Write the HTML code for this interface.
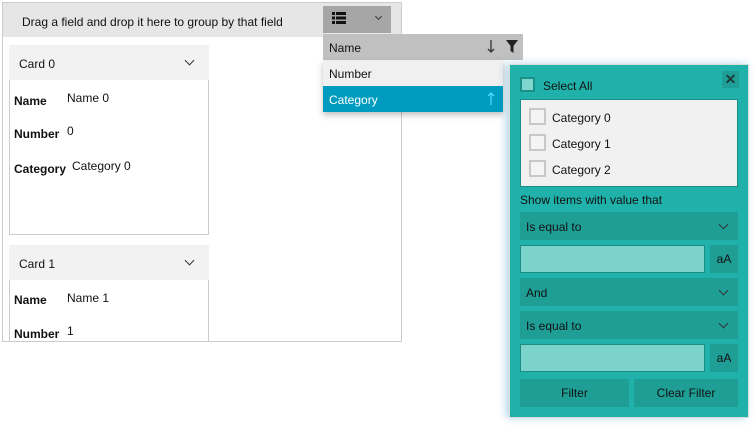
<!DOCTYPE html>
<html><head><meta charset="utf-8"><style>
*{margin:0;padding:0;box-sizing:border-box}
body{width:755px;height:430px;background:#fff;font-family:"Liberation Sans",sans-serif;font-size:12px;color:#111;position:relative;overflow:hidden}
.a{position:absolute}
.t{position:absolute;white-space:nowrap;line-height:14px}
.b{font-weight:bold}
.chev{position:absolute;width:7px;height:7px;border-right:1.3px solid #333;border-bottom:1.3px solid #333;transform:rotate(45deg)}
.cb{position:absolute;width:17px;height:17px;background:#f4f4f4;border:2px solid #c8c8c8}
.combo{position:absolute;left:520px;width:218px;height:28px;background:#1f9e96}
.inp{position:absolute;left:520px;width:185px;height:28px;background:#7bd3cb;border:1px solid #1a8d86}
.aa{position:absolute;left:710px;width:28px;height:28px;background:#1f9e96;text-align:center;line-height:28px}
</style></head><body>
<div class="a" style="left:2px;top:2px;width:400px;height:340px;border:1px solid #ccc"></div>
<div class="a" style="left:3px;top:3px;width:398px;height:34px;background:#e6e6e6"></div>
<div class="t" style="left:22px;top:15px">Drag a field and drop it here to group by that field</div>
<div class="a" style="left:323px;top:6px;width:68px;height:27px;background:#a6a6a6"></div>
<svg class="a" style="left:332px;top:12px" width="14" height="12"><rect x="0" y="0" width="3" height="3" fill="#111"/><rect x="4" y="0" width="10" height="3" fill="#111"/><rect x="0" y="4.5" width="3" height="3" fill="#111"/><rect x="4" y="4.5" width="10" height="3" fill="#111"/><rect x="0" y="9" width="3" height="3" fill="#111"/><rect x="4" y="9" width="10" height="3" fill="#111"/></svg>
<div class="chev" style="left:376px;top:14px;width:5px;height:5px"></div>

<div class="a" style="left:9px;top:45px;width:200px;height:190px;border:1px solid #ccc;border-top:none"></div>
<div class="a" style="left:9px;top:45px;width:200px;height:35px;background:#f2f2f2"></div>
<div class="t" style="left:19px;top:57px">Card 0</div>
<div class="chev" style="left:186px;top:57px"></div>
<div class="t b" style="left:14px;top:94px">Name</div><div class="t" style="left:67px;top:91px">Name 0</div>
<div class="t b" style="left:14px;top:127px">Number</div><div class="t" style="left:67px;top:124px">0</div>
<div class="t b" style="left:14px;top:162px">Category</div><div class="t" style="left:72px;top:159px">Category 0</div>

<div class="a" style="left:9px;top:245px;width:200px;height:96px;border:1px solid #ccc;border-top:none;border-bottom:none"></div>
<div class="a" style="left:9px;top:245px;width:200px;height:35px;background:#f2f2f2"></div>
<div class="t" style="left:19px;top:257px">Card 1</div>
<div class="chev" style="left:186px;top:257px"></div>
<div class="t b" style="left:14px;top:293px">Name</div><div class="t" style="left:67px;top:291px">Name 1</div>
<div class="t b" style="left:14px;top:327px">Number</div><div class="t" style="left:67px;top:324px">1</div>

<div class="a" style="left:323px;top:34px;width:200px;height:26px;background:#c0c0c0"></div>
<div class="t" style="left:329px;top:41px">Name</div>
<svg class="a" style="left:487px;top:40px" width="8" height="13"><path d="M4 0V12M1 9L4 12L7 9" stroke="#333" stroke-width="1.3" fill="none"/></svg>
<svg class="a" style="left:506px;top:40px" width="12" height="13"><path d="M0 0H12L7.5 6V13L4.5 11V6Z" fill="#222"/></svg>
<div class="a" style="left:323px;top:60px;width:180px;height:52px;box-shadow:0 3px 6px rgba(0,0,0,.25)"></div>
<div class="a" style="left:323px;top:60px;width:180px;height:26px;background:#f0f0f0"></div>
<div class="t" style="left:329px;top:67px">Number</div>
<div class="a" style="left:323px;top:86px;width:180px;height:26px;background:#009cbf"></div>
<div class="t" style="left:329px;top:93px;color:#fff">Category</div>
<svg class="a" style="left:487px;top:92px" width="8" height="13"><path d="M4 13V1M1 4L4 1L7 4" stroke="#4fd8ff" stroke-width="1.3" fill="none"/></svg>

<div class="a" style="left:509px;top:64px;width:240px;height:354px;background:#20b2aa;border:1px solid #ddd;box-shadow:-3px 0 8px rgba(0,120,180,.3)"></div>
<div class="a" style="left:520px;top:77px;width:15px;height:15px;background:#7fd6cf;border:2px solid #1a9088"></div>
<div class="t" style="left:543px;top:79px">Select All</div>
<div class="a" style="left:722px;top:71px;width:17px;height:17px;background:#1e9e96;text-align:center;line-height:17px;font-weight:bold;font-size:14px;color:#1a3a38">✕</div>
<div class="a" style="left:520px;top:99px;width:218px;height:88px;background:#f1f1f1;border:1px solid #1a8d86"></div>
<div class="cb" style="left:529px;top:108px"></div><div class="t" style="left:552px;top:111px">Category 0</div>
<div class="cb" style="left:529px;top:134px"></div><div class="t" style="left:552px;top:137px">Category 1</div>
<div class="cb" style="left:529px;top:160px"></div><div class="t" style="left:552px;top:163px">Category 2</div>
<div class="t" style="left:520px;top:193px">Show items with value that</div>
<div class="combo" style="top:212px"></div><div class="t" style="left:526px;top:220px">Is equal to</div><div class="chev" style="left:720px;top:221px"></div>
<div class="inp" style="top:245px"></div><div class="aa" style="top:245px">aA</div>
<div class="combo" style="top:278px"></div><div class="t" style="left:526px;top:286px">And</div><div class="chev" style="left:720px;top:287px"></div>
<div class="combo" style="top:311px"></div><div class="t" style="left:526px;top:319px">Is equal to</div><div class="chev" style="left:720px;top:320px"></div>
<div class="inp" style="top:344px"></div><div class="aa" style="top:344px">aA</div>
<div class="a" style="left:520px;top:379px;width:109px;height:28px;background:#1f9e96;text-align:center;line-height:28px">Filter</div>
<div class="a" style="left:634px;top:379px;width:104px;height:28px;background:#1f9e96;text-align:center;line-height:28px">Clear Filter</div>
</body></html>
